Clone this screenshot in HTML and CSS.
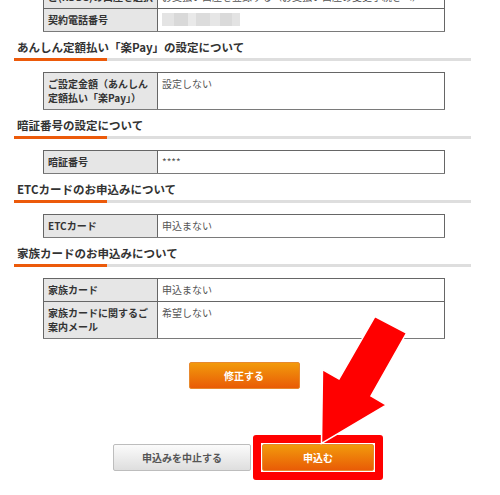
FILE: index.html
```html
<!DOCTYPE html>
<html lang="ja">
<head>
    <meta charset="UTF-8">
    <title>お申込み内容の確認</title>
    <link rel="stylesheet" href="styles.css">
</head>
<body>
    <div class="page">
        <table class="info-table first-table">
            <tr>
                <th>ご(RDDS)の口座を選択</th>
                <td>お支払い口座を登録する（お支払い口座の変更手続きへ）</td>
            </tr>
            <tr>
                <th>契約電話番号</th>
                <td><span class="masked"></span></td>
            </tr>
        </table>

        <div class="section-title">
            <h2>あんしん定額払い「楽Pay」の設定について</h2>
            <div class="title-bar"></div>
        </div>
        <table class="info-table">
            <tr>
                <th>ご設定金額（あんしん定額払い「楽Pay」）</th>
                <td>設定しない</td>
            </tr>
        </table>

        <div class="section-title">
            <h2>暗証番号の設定について</h2>
            <div class="title-bar"></div>
        </div>
        <table class="info-table">
            <tr>
                <th>暗証番号</th>
                <td>****</td>
            </tr>
        </table>

        <div class="section-title">
            <h2>ETCカードのお申込みについて</h2>
            <div class="title-bar"></div>
        </div>
        <table class="info-table">
            <tr>
                <th>ETCカード</th>
                <td>申込まない</td>
            </tr>
        </table>

        <div class="section-title">
            <h2>家族カードのお申込みについて</h2>
            <div class="title-bar"></div>
        </div>
        <table class="info-table">
            <tr>
                <th>家族カード</th>
                <td>申込まない</td>
            </tr>
            <tr>
                <th>家族カードに関するご案内メール</th>
                <td>希望しない</td>
            </tr>
        </table>

        <div class="actions">
            <button class="btn btn-orange">修正する</button>
        </div>

        <div class="actions actions-final">
            <button class="btn btn-gray">申込みを中止する</button>
            <span class="highlight">
                <button class="btn btn-orange">申込む</button>
            </span>
        </div>

        <!-- annotation arrow -->
        <svg class="arrow" viewBox="0 0 500 495" width="500" height="495">
            <polygon points="375,316.5 406.5,333 371,396 386.5,405 321.5,443.5 322.5,369.5 339,379"
                     fill="#ff0000" stroke="#ffffff" stroke-width="1.5" stroke-linejoin="miter"/>
        </svg>
    </div>
</body>
</html>
```

FILE: styles.css
```css
/* Global Styles */
body {
    margin: 0;
    padding: 0;
    background: #ffffff;
    color: #333;
    font-family: "Noto Sans CJK JP", "Noto Sans", sans-serif;
}

.page {
    position: relative;
    display: flow-root;
    width: 500px;
    height: 495px;
    overflow: hidden;
}

/* Tables */
.info-table {
    margin-left: 43px;
    width: 402px;
    border-collapse: collapse;
    font-size: 10px;
    line-height: 14px;
}

.first-table {
    margin-top: -15px;
}

    .info-table th,
    .info-table td {
        border: 1px solid #666;
        padding: 4px;
        vertical-align: top;
        text-align: left;
    }

    .info-table tr:last-child th,
    .info-table tr:last-child td {
        border-bottom-color: #7a7a7a;
    }

    .info-table th {
        width: 105px;
        background-color: #e6e6e6;
        color: #333;
        font-weight: bold;
    }

    .info-table td {
        background-color: #fff;
        color: #555;
        font-weight: normal;
    }

.masked {
    display: inline-block;
    width: 78px;
    height: 13px;
    vertical-align: top;
    background: linear-gradient(to right, #e4e4e4 0 12px, #d9d9d9 12px 26px, #e9e9e9 26px 34px, #dcdcdc 34px 48px, #e6e6e6 48px 58px, #dadada 58px 70px, #e3e3e3 70px);
}

/* Section headings */
.section-title {
    margin: 8px 0 11px 14px;
    width: 457px;
}

    .section-title h2 {
        margin: 0;
        padding-left: 3px;
        font-size: 11.5px;
        line-height: 15px;
        font-weight: bold;
        color: #333;
    }

.title-bar {
    margin-top: 3px;
    height: 3px;
    background: linear-gradient(to right, #ec5a0a 0 93px, #dedede 93px);
}

/* Buttons */
.actions {
    margin: 23px 0 0 43px;
    width: 402px;
    display: flex;
    justify-content: center;
    align-items: center;
}

.actions-final {
    margin-top: 46px;
    justify-content: flex-start;
    padding-left: 70px;
    box-sizing: border-box;
}

.btn {
    height: 27px;
    padding: 0;
    border-radius: 2px;
    font-family: "Noto Sans CJK JP", "Noto Sans", sans-serif;
    font-size: 10px;
    font-weight: bold;
    cursor: pointer;
}

.btn-orange {
    width: 111px;
    background: linear-gradient(to bottom, #f29a0c, #e95c06);
    border: 1px solid #e8892e;
    color: #fff;
}

.btn-gray {
    width: 138px;
    background: linear-gradient(to bottom, #fbfbfb, #dedede);
    border: 1px solid #bdbdbd;
    color: #555;
}

.highlight {
    display: inline-flex;
    margin-left: 2px;
    padding: 1px;
    border: 8px solid #ff0000;
    border-radius: 3px;
    background: #fff;
}

    .highlight .btn {
        width: 112px;
    }

.arrow {
    position: absolute;
    left: 0;
    top: 0;
    pointer-events: none;
}
```
